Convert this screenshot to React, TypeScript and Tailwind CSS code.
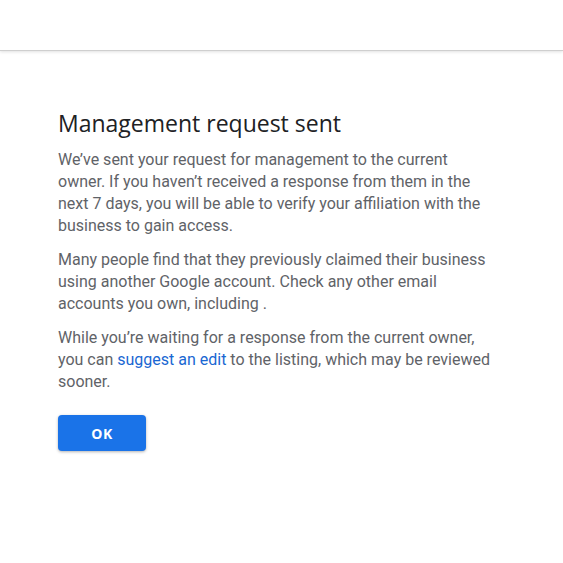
export default function App() {
  return (
    <div className="w-[563px] h-[563px] bg-white overflow-hidden" style={{ fontFamily: "Roboto, Arial, sans-serif" }}>
      <div className="h-[51px] border-b border-[#cfcfcf] shadow-[0_1px_3px_rgba(0,0,0,0.12)]" />
      <div className="pl-[58px] pt-[56px]">
        <h1 className="text-[23px] leading-[32px] text-[#202124] font-normal" style={{ fontFamily: "'Open Sans', Roboto, sans-serif" }}>
          Management request sent
        </h1>
        <div className="w-[440px] mt-[10px] text-[16px] leading-[22px] text-[#5f6368]">
          <p>We’ve sent your request for management to the current owner. If you haven’t received a response from them in the next 7 days, you will be able to verify your affiliation with the business to gain access.</p>
          <p className="mt-[12px]">Many people find that they previously claimed their business using another Google account. Check any other email accounts you own, including .</p>
          <p className="mt-[12px]">While you’re waiting for a response from the current owner, you can <span className="text-[#1967d2]">suggest an edit</span> to the listing, which may be reviewed sooner.</p>
        </div>
        <button className="mt-[22px] w-[88px] h-[36px] rounded-[4px] bg-[#1a73e8] text-white text-[14px] font-bold tracking-[0.5px] shadow-[0_1px_3px_rgba(0,0,0,0.3)]" style={{ fontFamily: "'Open Sans', Roboto, sans-serif" }}>
          OK
        </button>
      </div>
    </div>
  );
}
